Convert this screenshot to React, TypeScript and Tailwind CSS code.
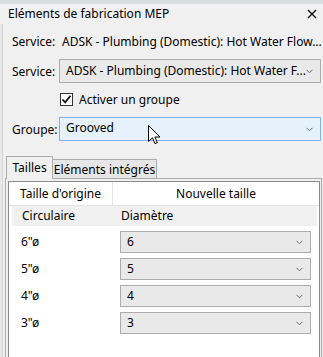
import React from "react";

const Chevron = () => (
  <svg width="7" height="5" viewBox="0 0 7 5" className="shrink-0">
    <path d="M0.5 0.8 L3.5 3.8 L6.5 0.8" fill="none" stroke="#6d6d6d" strokeWidth="1" />
  </svg>
);

function Combo({ text, className = "" }: { text: string; className?: string }) {
  return (
    <div
      className={
        "flex items-center justify-between border border-[#acacac] bg-[#e9e9e9] pl-[6px] pr-[7px] " +
        className
      }
    >
      <span className="whitespace-nowrap">{text}</span>
      <Chevron />
    </div>
  );
}

const rows = [
  { label: "6\"ø", value: "6" },
  { label: "5\"ø", value: "5" },
  { label: "4\"ø", value: "4" },
  { label: "3\"ø", value: "3" },
];

export default function App() {
  return (
    <div
      className="relative flex h-[357px] w-[323px] flex-col overflow-hidden bg-[#f0f0f0] text-[12px] leading-[16px] text-black"
      style={{ fontFamily: '"Noto Sans", "Open Sans", sans-serif' }}
    >
      <div className="h-[4px] shrink-0 bg-[#d8dede]" />
      {/* title row */}
      <div className="flex h-[20px] shrink-0 items-center justify-between pl-[8px] pr-[6px]">
        <span>Eléments de fabrication MEP</span>
        <svg width="10" height="10" viewBox="0 0 10 10">
          <path d="M1 1 L9 9 M9 1 L1 9" stroke="#111" strokeWidth="1.4" />
        </svg>
      </div>
      <div className="flex flex-1">
        {/* left edge */}
        <div className="w-[3px] shrink-0 border-r border-[#d4d4d4] bg-[#e8e8e8]" />
        <div className="flex flex-1 flex-col">
          {/* static service */}
          <div className="mt-[10px] flex h-[16px] items-center pl-[9px]">
            <span className="w-[50px] shrink-0">Service:</span>
            <span className="whitespace-nowrap">ADSK - Plumbing (Domestic): Hot Water Flow...</span>
          </div>
          {/* service select */}
          <div className="mt-[9px] flex h-[24px] items-center pl-[9px] pr-[2px]">
            <span className="w-[47px] shrink-0 pt-[2px]">Service:</span>
            <Combo text="ADSK - Plumbing (Domestic): Hot Water F..." className="h-[24px] flex-1" />
          </div>
          {/* checkbox */}
          <div className="mt-[10px] flex h-[13px] items-center pl-[57px]">
            <div className="flex h-[13px] w-[13px] items-center justify-center border border-[#333] bg-white">
              <svg width="11" height="11" viewBox="0 0 11 11">
                <path d="M1.5 5.5 L4.2 8.3 L9.5 1.8" fill="none" stroke="#111" strokeWidth="1.8" />
              </svg>
            </div>
            <span className="ml-[6px]">Activer un groupe</span>
          </div>
          {/* groupe */}
          <div className="mt-[11px] flex h-[24px] items-center pl-[9px] pr-[2px]">
            <span className="w-[47px] shrink-0 pt-[2px]">Groupe:</span>
            <div className="flex h-[24px] flex-1 items-center justify-between border border-[#7eb4ea] bg-[#e5f1fb] pl-[6px] pr-[7px]">
              <span className="pb-[3px]">Grooved</span>
              <Chevron />
            </div>
          </div>
          {/* tabs */}
          <div className="mt-[15px] flex h-[23px] items-end pl-[3px]">
            <div className="relative z-10 flex h-[23px] w-[47px] items-center justify-center border border-b-0 border-[#acacac] bg-[#f0f0f0] pb-[1px]">
              Tailles
            </div>
            <div className="flex h-[20px] w-[104px] items-center justify-center border border-b-0 border-l-0 border-[#acacac] bg-[#e6e6e6]">
              Eléments intégrés
            </div>
          </div>
          {/* panel */}
          <div className="-mt-[1px] ml-[2px] mr-[1px] flex flex-1 flex-col border border-b-0 border-[#acacac] pl-[2px] pr-[1px] pt-[2px]">
            <div className="flex flex-1 flex-col border border-b-0 border-[#8c8c8c] bg-white">
              {/* header */}
              <div className="flex h-[24px] border-b border-[#e3e3e3]">
                <div className="flex w-[104px] items-center justify-center border-r border-[#e3e3e3]">
                  Taille d'origine
                </div>
                <div className="flex flex-1 items-center justify-center">Nouvelle taille</div>
              </div>
              {/* group row */}
              <div className="ml-[3px] mr-[2px] flex h-[20px] items-center bg-[#f0f0f0]">
                <span className="w-[109px] pl-[10px]">Circulaire</span>
                <span>Diamètre</span>
              </div>
              <div className="mt-[5px] flex flex-col gap-[5px]">
                {rows.map((r) => (
                  <div key={r.value} className="flex h-[22px] items-center">
                    <span className="w-[111px] pl-[12px]">{r.label}</span>
                    <Combo text={r.value} className="h-[22px] w-[191px]" />
                  </div>
                ))}
              </div>
            </div>
          </div>
        </div>
        {/* right edge */}
        <div className="w-[3px] shrink-0 border-l border-[#cfcfcf] bg-[#e8e8e8]" />
      </div>
      {/* cursor */}
      <svg
        className="pointer-events-none absolute left-[148px] top-[125px]"
        width="13"
        height="20"
        viewBox="0 0 13 20"
      >
        <path
          d="M0.5 0.5 L0.5 16.5 L4.5 12.8 L7 18.7 L9.3 17.7 L6.9 12 L12 12 Z"
          fill="#fff"
          stroke="#000"
          strokeWidth="1"
          strokeLinejoin="miter"
        />
      </svg>
    </div>
  );
}
